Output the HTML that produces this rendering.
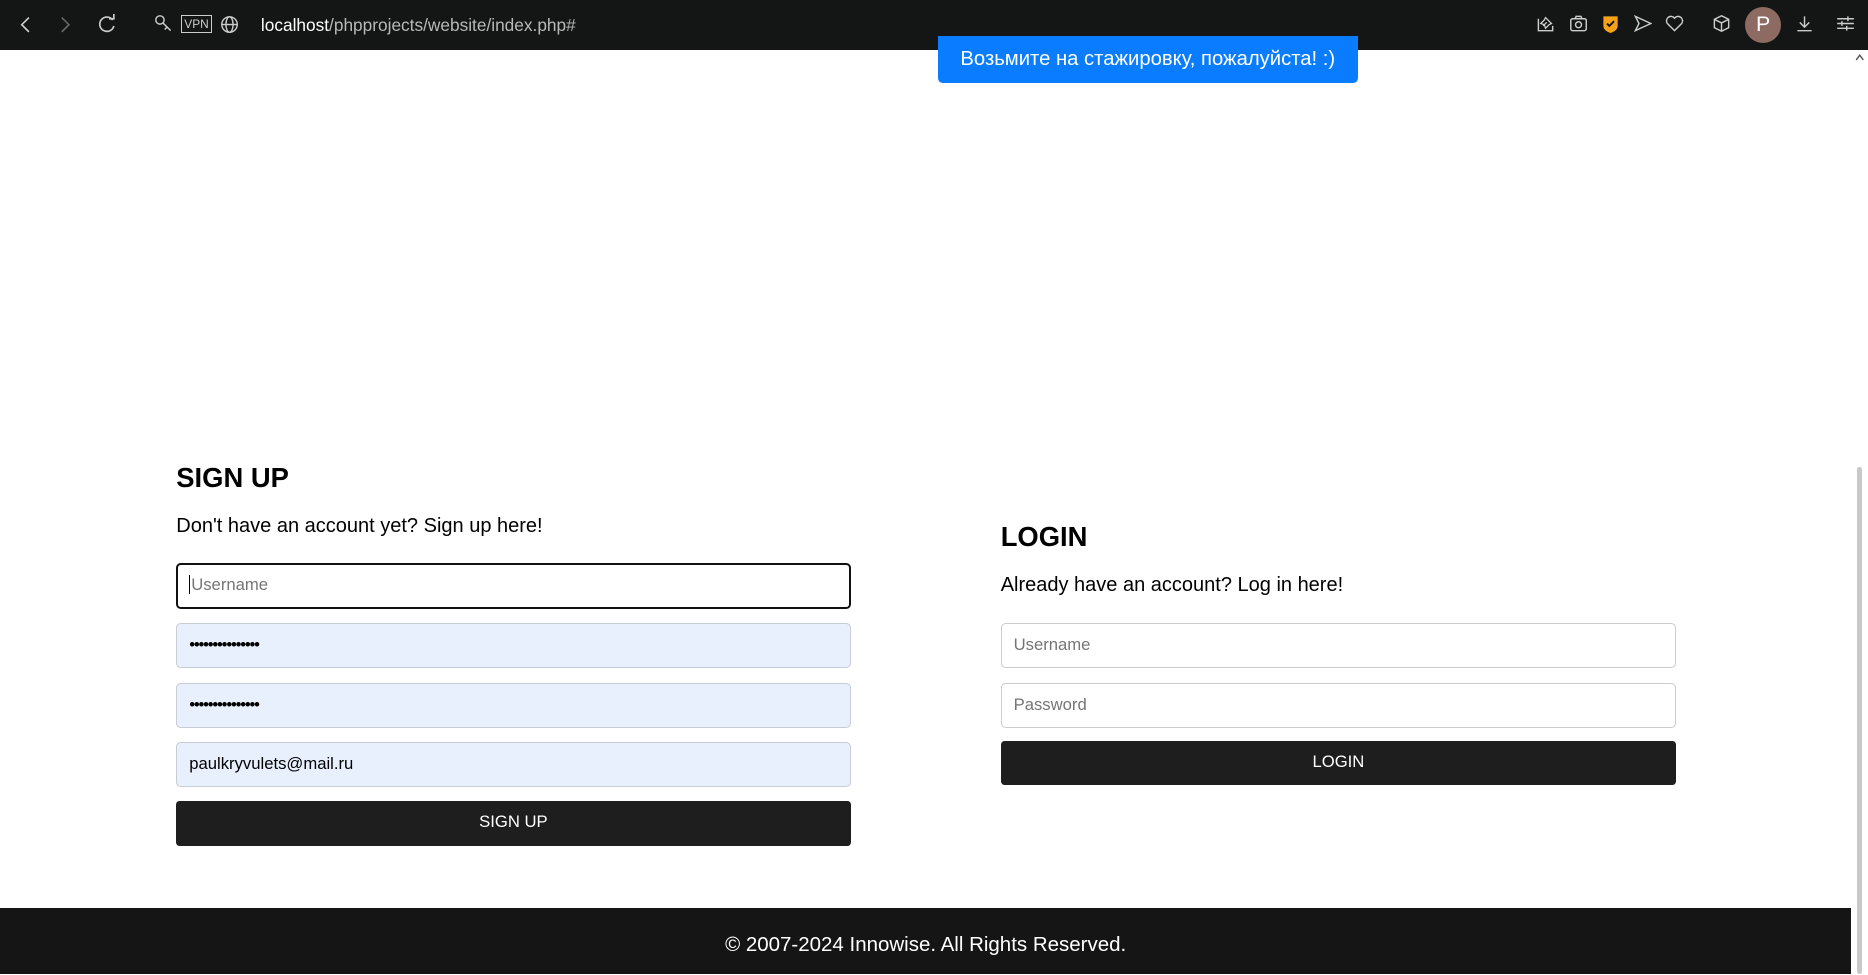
<!DOCTYPE html>
<html><head><meta charset="utf-8"><style>
html,body{margin:0;padding:0;background:#fff;overflow:hidden}
body{zoom:1.1913;width:1568px;height:818px;position:relative;font-family:"Liberation Sans",Arial,sans-serif}
.bar{position:absolute;left:0;top:0;width:1568px;height:42px;background:#141616}
.url{position:absolute;left:219px;top:13px;font-size:14.5px;color:#b8b8b8}
.url b{font-weight:normal;color:#fff}
.ic{position:absolute;top:12px}
.blue{position:absolute;left:787px;top:30px;width:353px;height:40px;background:#0a7cff;border-radius:0 0 4px 4px;color:#fff;font-size:17px;text-align:center;line-height:40px}
h2{position:absolute;margin:0;font-size:23px;font-weight:bold;color:#000}
p{position:absolute;margin:0;font-size:16.8px;color:#000}
.in{position:absolute;width:566px;height:38px;box-sizing:border-box;border:1px solid #ccc;border-radius:4px;font-size:14px;line-height:36px;padding-left:10px;color:#000}
.ph{color:#757575}
.fill{background:#e8f0fe;border-color:#c8ccd4}
.btn{position:absolute;width:566px;height:38px;background:#1e1e1e;color:#fff;border-radius:3px;font-size:14px;text-align:center;line-height:36px}
.foot{position:absolute;left:0;top:762px;width:1554px;height:56px;background:#151515;color:#fff;font-size:17.2px;text-align:center;line-height:62px}
.sb{position:absolute;right:0;top:42px;width:14px;height:776px;background:#fff}
.thumb{position:absolute;left:1559px;top:392px;width:4px;height:426px;background:#c8c8c8;border-radius:2px}
</style></head><body>
<div class="bar">
<svg class="ic" style="left:14px" width="14" height="18" viewBox="0 0 14 18"><path d="M10 3 L4 9 L10 15" fill="none" stroke="#ccc" stroke-width="1.4"/></svg>
<svg class="ic" style="left:48px" width="14" height="18" viewBox="0 0 14 18"><path d="M4 3 L10 9 L4 15" fill="none" stroke="#666" stroke-width="1.4"/></svg>
<svg class="ic" style="left:81px" width="18" height="18" viewBox="0 0 18 18"><path d="M14 5 A6 6 0 1 0 15 10" fill="none" stroke="#ccc" stroke-width="1.4"/><path d="M11 4 L15 4 L15 0" fill="none" stroke="#ccc" stroke-width="1.4"/></svg>
<svg class="ic" style="left:129px" width="16" height="18" viewBox="0 0 16 18"><circle cx="5" cy="5" r="3.5" fill="none" stroke="#ccc" stroke-width="1.2"/><path d="M7.5 7.5 L14 14 M11 11 L9 13" stroke="#ccc" stroke-width="1.2"/></svg>
<div style="position:absolute;left:152px;top:13px;width:26px;height:15px;border:1px solid #ccc;color:#ccc;font-size:10px;line-height:14px;text-align:center;box-sizing:border-box">VPN</div>
<svg class="ic" style="left:185px;top:13px" width="16" height="16" viewBox="0 0 16 16"><circle cx="8" cy="8" r="6.5" fill="none" stroke="#ccc" stroke-width="1.2"/><ellipse cx="8" cy="8" rx="3" ry="6.5" fill="none" stroke="#ccc" stroke-width="1.2"/><path d="M1.5 8 H14.5" stroke="#ccc" stroke-width="1.2"/></svg>
<div class="url"><b>localhost</b>/phpprojects/website/index.php#</div>
<svg class="ic" style="left:1289px" width="16" height="16" viewBox="0 0 16 16"><path d="M2 4 V14 H14 V10" fill="none" stroke="#ccc" stroke-width="1.2"/><path d="M6 10 L9 7 M8 3 L13 8 L11 9 L8 12 L7 9 L4 8 L7 5 Z" fill="none" stroke="#ccc" stroke-width="1.1"/></svg>
<svg class="ic" style="left:1317px" width="16" height="16" viewBox="0 0 16 16"><rect x="1.5" y="4" width="13" height="10" rx="1.5" fill="none" stroke="#ccc" stroke-width="1.2"/><circle cx="8" cy="9" r="2.5" fill="none" stroke="#ccc" stroke-width="1.2"/><path d="M5 4 L6 2 H10 L11 4" fill="none" stroke="#ccc" stroke-width="1.2"/></svg>
<svg class="ic" style="left:1344px" width="16" height="17" viewBox="0 0 16 17"><path d="M2 2 H14 V10 Q14 14 8 16 Q2 14 2 10 Z" fill="#f7a219"/><path d="M5 8 L7 10 L11 6" fill="none" stroke="#141616" stroke-width="1.6"/></svg>
<svg class="ic" style="left:1371px" width="16" height="16" viewBox="0 0 16 16"><path d="M2 2 L15 8 L2 14 L5 8 Z" fill="none" stroke="#ccc" stroke-width="1.2"/></svg>
<svg class="ic" style="left:1398px" width="16" height="16" viewBox="0 0 16 16"><path d="M8 14 L2 8 A3.3 3.3 0 0 1 8 3.5 A3.3 3.3 0 0 1 14 8 Z" fill="none" stroke="#ccc" stroke-width="1.2"/></svg>
<svg class="ic" style="left:1437px" width="16" height="16" viewBox="0 0 16 16"><path d="M8 1.5 L14 4.5 V11.5 L8 14.5 L2 11.5 V4.5 Z M2 4.5 L8 7.5 L14 4.5 M8 7.5 V14.5" fill="none" stroke="#ccc" stroke-width="1.2"/></svg>
<div style="position:absolute;left:1465px;top:6px;width:30px;height:30px;border-radius:50%;background:#8d6b63;color:#fff;font-size:18px;text-align:center;line-height:30px">P</div>
<svg class="ic" style="left:1507px" width="16" height="16" viewBox="0 0 16 16"><path d="M8 2 V11 M4 7 L8 11 L12 7 M2 14 H14" fill="none" stroke="#ccc" stroke-width="1.2"/></svg>
<svg class="ic" style="left:1541px" width="16" height="16" viewBox="0 0 16 16"><path d="M1 4 H15 M1 8 H15 M1 12 H15 M10 2 V6 M5 6 V10 M9 10 V14" fill="none" stroke="#ccc" stroke-width="1.2"/></svg>
</div>
<div class="blue">Возьмите на стажировку, пожалуйста! :)</div>

<h2 style="left:148px;top:388px">SIGN UP</h2>
<p style="left:148px;top:432px">Don't have an account yet? Sign up here!</p>
<div class="in ph" style="left:148px;top:473px;border:2px solid #111;line-height:34px;padding-left:9px"><span style="border-left:1px solid #000;margin-right:1px"></span>Username</div>
<div class="in fill" style="left:148px;top:523px;letter-spacing:-1px">•••••••••••••••</div>
<div class="in fill" style="left:148px;top:573px;letter-spacing:-1px">•••••••••••••••</div>
<div class="in fill" style="left:148px;top:623px">paulkryvulets@mail.ru</div>
<div class="btn" style="left:148px;top:672px">SIGN UP</div>

<h2 style="left:840px;top:437px">LOGIN</h2>
<p style="left:840px;top:482px">Already have an account? Log in here!</p>
<div class="in ph" style="left:840px;top:523px;width:567px">Username</div>
<div class="in ph" style="left:840px;top:573px;width:567px">Password</div>
<div class="btn" style="left:840px;top:622px;width:567px;height:37px">LOGIN</div>

<div class="foot">© 2007-2024 Innowise. All Rights Reserved.</div>
<div class="sb"></div>
<div class="thumb"></div>
<svg style="position:absolute;left:1557px;top:45px" width="8" height="6" viewBox="0 0 8 6"><path d="M1 5 L4 1 L7 5" fill="none" stroke="#555" stroke-width="1.2"/></svg>
</body></html>
